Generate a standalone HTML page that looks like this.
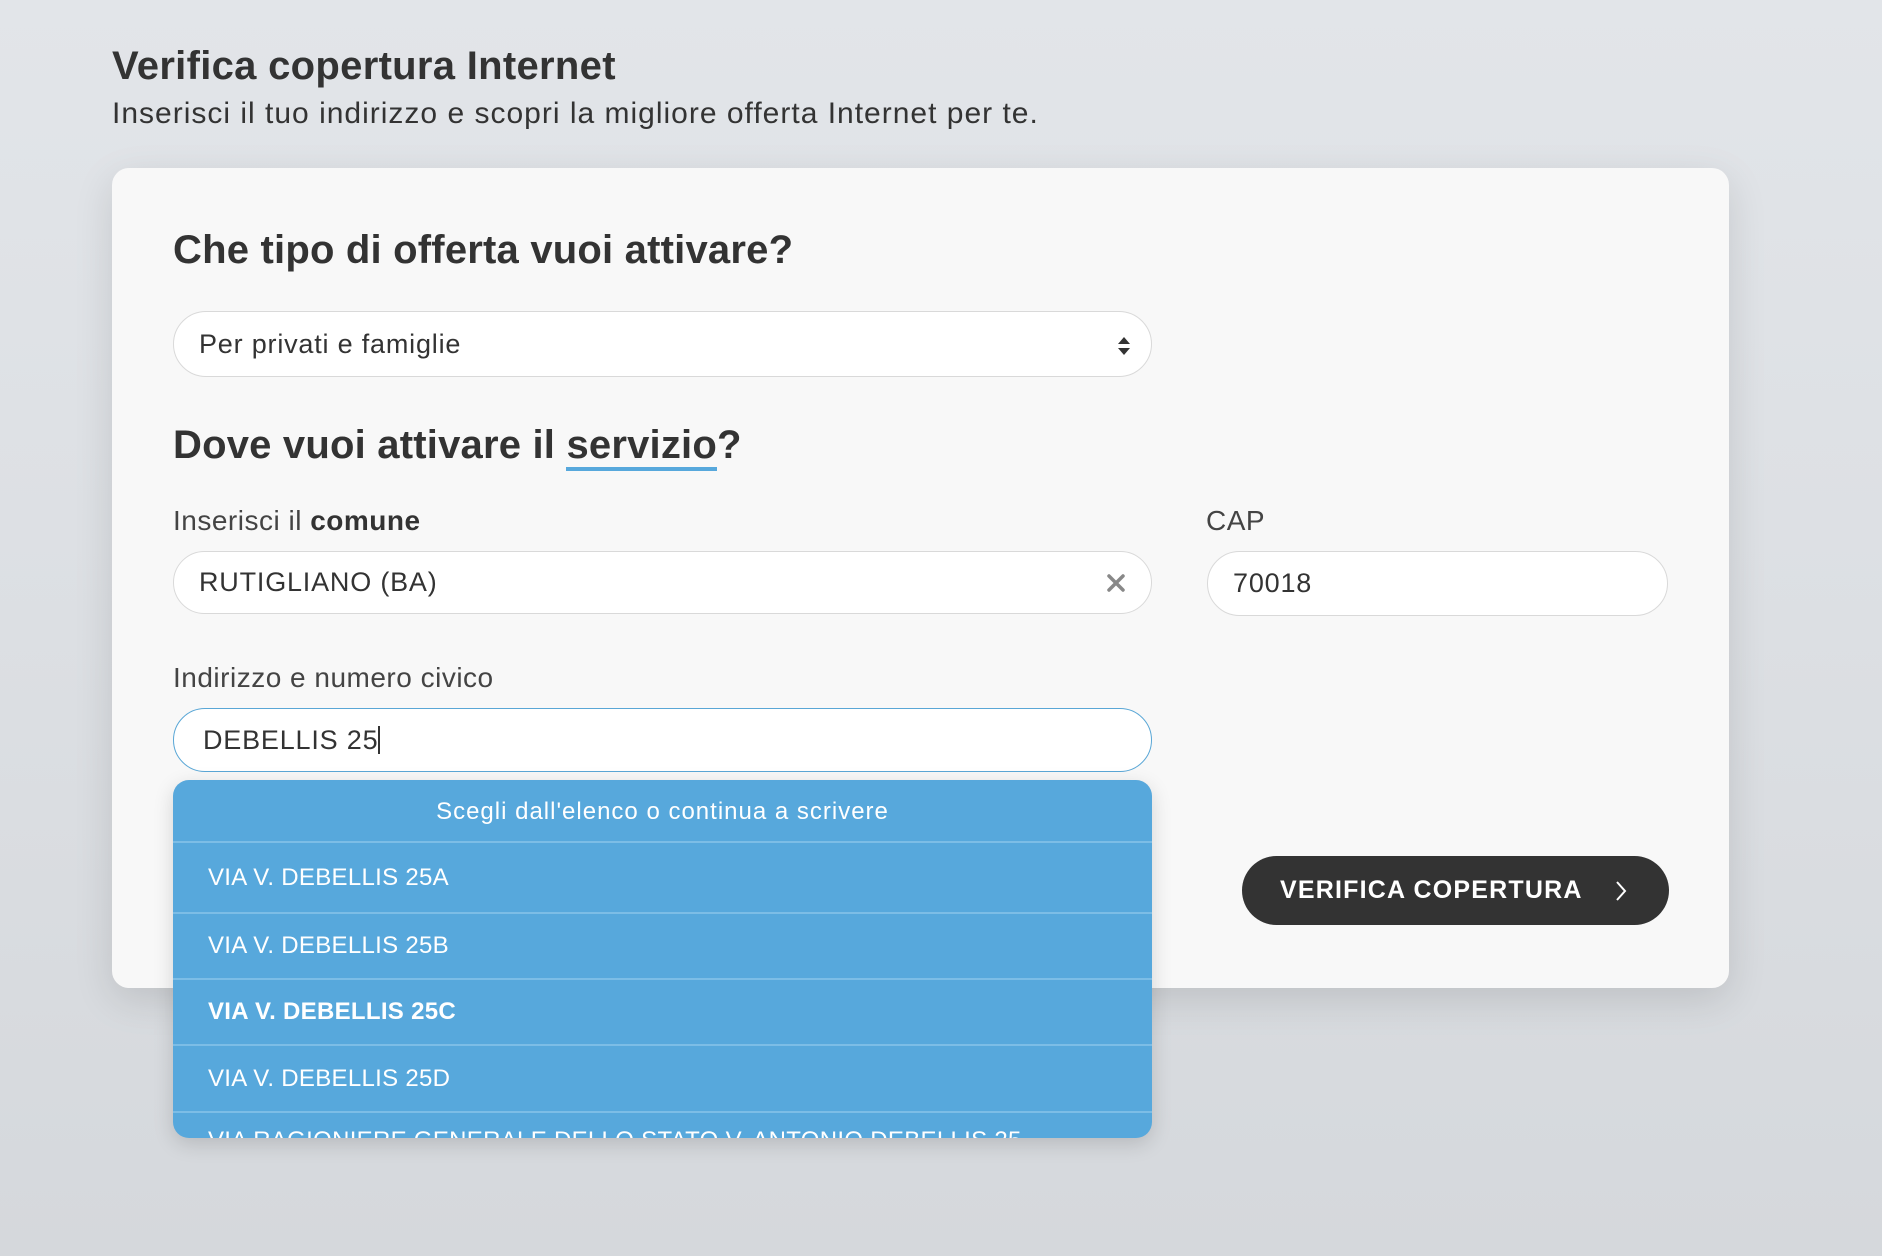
<!DOCTYPE html>
<html><head><meta charset="utf-8"><style>
*{margin:0;padding:0;box-sizing:border-box}
body{width:1882px;height:1256px;overflow:hidden;background:linear-gradient(180deg,#e2e5e9 0%,#dcdfe3 50%,#d5d8dc 100%);font-family:"Liberation Sans",sans-serif;color:#333;position:relative}
.a{position:absolute;white-space:nowrap}
.card{position:absolute;left:112px;top:168px;width:1617px;height:820px;background:#f8f8f8;border-radius:17px;box-shadow:0 12px 40px rgba(0,0,0,.12)}
.inp{position:absolute;background:#fff;border:1px solid #d9d9d9;border-radius:34px;font-size:27px;letter-spacing:0.8px;color:#333;display:flex;align-items:center;padding-left:25px}
.dd{position:absolute;left:173px;top:780px;width:979px;height:358px;background:#57a8dc;border-radius:16px;overflow:hidden;color:#fff;box-shadow:0 6px 20px rgba(0,0,0,.15)}
.row{position:absolute;left:0;width:100%;border-top:2px solid #7cbde6;font-size:24px;letter-spacing:0.3px;padding-left:35px;display:flex;align-items:center}
.lab{font-size:28px;letter-spacing:0.5px;color:#444}
.h2{font-size:40px;font-weight:900;letter-spacing:0.2px}
</style></head><body>
<div class="a" style="left:112px;top:44px;font-size:40px;font-weight:bold;letter-spacing:0.3px">Verifica copertura Internet</div>
<div class="a" style="left:112px;top:97px;font-size:30px;letter-spacing:1px">Inserisci il tuo indirizzo e scopri la migliore offerta Internet per te.</div>
<div class="card"></div>
<div class="a h2" style="left:173px;top:228px">Che tipo di offerta vuoi attivare?</div>
<div class="inp" style="left:173px;top:311px;width:979px;height:66px">Per privati e famiglie
<svg style="position:absolute;right:20px;top:24px" width="14" height="20" viewBox="0 0 14 20"><path d="M7 1L13 8H1Z M7 19L13 12H1Z" fill="#333"/></svg></div>
<div class="a h2" style="left:173px;top:423px">Dove vuoi attivare il <span style="border-bottom:4px solid #57a8dc">servizio</span>?</div>
<div class="a lab" style="left:173px;top:505px">Inserisci il <b style="color:#333">comune</b></div>
<div class="inp" style="left:173px;top:551px;width:979px;height:63px">RUTIGLIANO (BA)
<svg style="position:absolute;right:26px;top:22px" width="18" height="18" viewBox="0 0 18 18"><path d="M2 2L16 16M16 2L2 16" stroke="#888" stroke-width="3.5" stroke-linecap="round"/></svg></div>
<div class="a lab" style="left:1206px;top:505px">CAP</div>
<div class="inp" style="left:1207px;top:551px;width:461px;height:65px">70018</div>
<div class="a lab" style="left:173px;top:662px">Indirizzo e numero civico</div>
<div class="inp" style="left:173px;top:708px;width:979px;height:64px;border:1.5px solid #5aa7d6;padding-left:29px">DEBELLIS 25<span style="display:inline-block;width:2px;height:28px;background:#333"></span></div>
<div class="dd">
<div class="a" style="left:0;width:100%;top:18px;text-align:center;font-size:24px;letter-spacing:1px">Scegli dall'elenco o continua a scrivere</div>
<div class="row" style="top:61px;height:71px">VIA V. DEBELLIS 25A</div>
<div class="row" style="top:132px;height:66px">VIA V. DEBELLIS 25B</div>
<div class="row" style="top:198px;height:66px;font-weight:bold">VIA V. DEBELLIS 25C</div>
<div class="row" style="top:264px;height:67px">VIA V. DEBELLIS 25D</div>
<div class="row" style="top:331px;height:60px;align-items:flex-start;padding-top:14px">VIA RAGIONIERE GENERALE DELLO STATO V. ANTONIO DEBELLIS 25</div>
</div>
<div class="a" style="left:1242px;top:856px;width:427px;height:69px;background:#333;border-radius:35px;color:#fff;font-size:25px;font-weight:bold;letter-spacing:1.2px;display:flex;align-items:center;padding-left:38px">VERIFICA COPERTURA
<svg style="position:absolute;right:42px;top:24px" width="12" height="22" viewBox="0 0 12 22"><path d="M2 2L10 11L2 20" stroke="#fff" stroke-width="2" fill="none"/></svg></div>
</body></html>
